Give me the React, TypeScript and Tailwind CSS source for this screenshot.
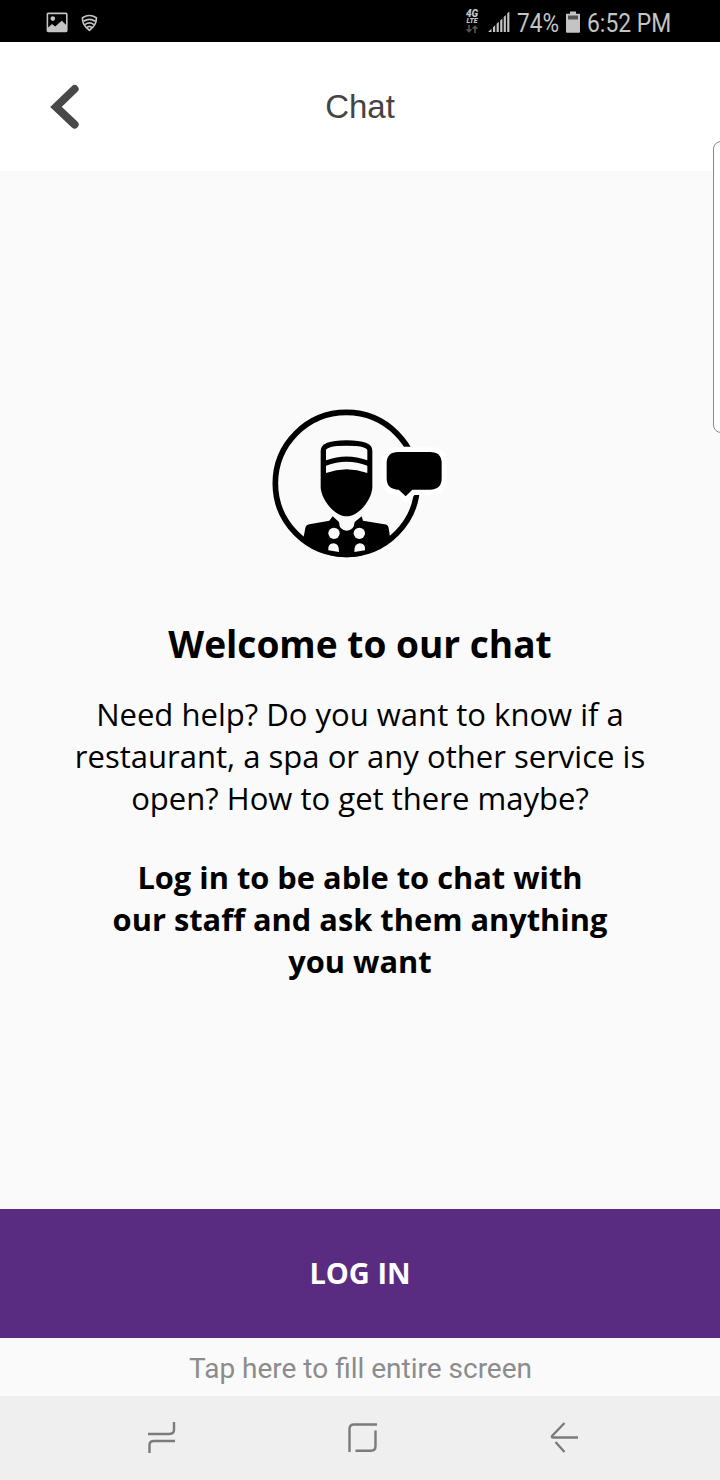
const StatusBar = () => {
  return (
    <div className="flex h-[42px] items-center bg-black font-['Roboto',sans-serif] text-[#c4c4c4]">
      <svg className="mt-[2px] ml-[46px] h-[21px] w-[22px]" viewBox="0 0 22 21" fill="#c4c4c4">
        <path
          fillRule="evenodd"
          d="M2.200.5h17.800q1.600 0 1.600 1.600v16.500q0 1.600-1.600 1.600H2.200Q.6 20.200.6 18.600V2.100Q.6.5 2.200.5ZM2.200 2.200V15.500l3.800-3.500 3.200 2.500 6.500-5.700 4.300 4V2.200Z"
        />
        <circle cx="6.800" cy="6.600" r="2.300" />
      </svg>
      <svg
        className="mt-[3px] ml-[13px] h-[18px] w-[17px]"
        viewBox="0 0 17 18"
        fill="none"
        stroke="#c4c4c4"
        strokeWidth="1.700"
      >
        <path d="M1.500 3.800Q8.400-.8 15.300 3.800 15.800 11 8.400 16.200 1 11 1.500 3.800Z" />
        <path d="M2.600 7.300Q8.400 3.600 14.200 7.300M4 10.600Q8.400 7.300 12.800 10.600M5.800 13.700Q8.400 11 11 13.700" />
      </svg>
      <div className="ml-auto flex w-[14px] flex-col items-center text-[10px] leading-[8px] font-black italic">
        <span>4G</span>
        <span className="text-[7px] leading-[7px]">LTE</span>
        <svg className="h-[8px] w-[12px]" viewBox="0 0 12 8" fill="none" stroke="#555" strokeWidth="1.600">
          <path d="M3 0V6.500M.6 4.200 3 6.600 5.400 4.200M9 8V1.500M6.600 3.800 9 1.400 11.400 3.800" />
        </svg>
      </div>
      <svg className="mt-[2px] ml-[9px] h-[22px] w-[22px]" viewBox="0 0 22 22" fill="#c4c4c4">
        <path d="M0 21 3.500 17.700V21ZM5 16.200 7.200 14.200V21H5ZM8.600 12.800 10.800 10.800V21H8.600ZM12.200 9.400 14.400 7.400V21H12.200ZM15.700 6 17.900 4V21H15.700ZM19.200 2.500 21.400.5V21H19.200Z" />
      </svg>
      <div className="mt-[4px] ml-[7px] w-[43px] text-[26px] leading-none">
        <span className="inline-block origin-left scale-x-[0.870]">74%</span>
      </div>
      <svg className="mt-[2px] ml-[5px] h-[23px] w-[16px]" viewBox="0 0 16 23">
        <path d="M5 .5h6v2.300h3.500q.5 0 .5.500v17.500q0 1-1 1H2q-1 0-1-1V3.300q0-.5.500-.5H5Z" fill="#c4c4c4" />
        <path d="M3 4.500h10v4H3Z" fill="#555" />
      </svg>
      <div className="mt-[4px] mr-[49px] ml-[6px] w-[84px] text-[26px] leading-none whitespace-nowrap">
        <span className="inline-block origin-left scale-x-[0.880]">6:52 PM</span>
      </div>
    </div>
  );
};

const Header = () => {
  return (
    <div className="grid h-[129px] grid-cols-[120px_1fr_120px] items-center bg-white">
      <svg
        className="ml-[50px] h-[46px] w-[30px]"
        viewBox="0 0 30 46"
        fill="none"
        stroke="#484848"
        strokeWidth="8"
        strokeLinecap="round"
      >
        <path d="M24.600 5 6 23 24.600 40.500" />
      </svg>
      <h1 className="text-center font-['Liberation_Sans',sans-serif] text-[33px] leading-none text-[#444]">Chat</h1>
    </div>
  );
};

const ConciergeIcon = () => {
  return (
    <svg className="h-[170px] w-[200px]" viewBox="0 0 600 510">
      <circle cx="259" cy="250" r="213" fill="none" stroke="#000" strokeWidth="17" />
      {/* jacket */}
      <path
        d="M131 410 136 384Q138 375 148 373L208 362 218 349 237 366Q238 392 260 392 282 392 284 366L305 349 309 362 373 373Q384 374 386 384L390 410Q335 472 260 472 184 472 131 410Z"
        fill="#000"
      />
      <g fill="#fafafa">
        <circle cx="222" cy="400" r="17" />
        <circle cx="298" cy="400" r="17" />
        <path d="M205 451Q202 431 221 430 238 431 237 456ZM283 456Q282 431 299 430 318 431 315 451Z" />
      </g>
      {/* hat and face */}
      <path
        d="M182 152Q182 121 260 121 337 121 337 152V260C337 295 299 349 260 349S182 295 182 260Z"
        fill="#000"
      />
      <path
        d="M198 150Q203 137 260 137 317 137 322 150V181Q260 158 198 181ZM198 197Q260 174 322 197V219Q260 197 198 219Z"
        fill="#fafafa"
      />
      {/* speech bubble */}
      <path
        d="M415 156H510Q545 156 545 190V235Q545 269 510 269H457L437 289 416 269Q380 269 380 235V190Q380 156 415 156Z"
        fill="#000"
        stroke="#fff"
        strokeWidth="32"
        strokeLinejoin="round"
        paintOrder="stroke"
      />
    </svg>
  );
};

const NavBar = () => {
  return (
    <div className="flex h-[84px] bg-[#efefef]">
      <svg className="mt-[25px] ml-[147px] h-[34px] w-[30px]" viewBox="0 0 30 34" fill="none" stroke="#7b7b7b" strokeWidth="2.400">
        <path d="M1 13H22Q27 13 27 9V1M28 20H7Q2.500 20 2.500 24V32" />
      </svg>
      <svg className="mt-[25px] ml-[170px] h-[34px] w-[32px]" viewBox="0 0 32 34" fill="none" stroke="#7b7b7b" strokeWidth="2.400">
        <path d="M2.500 31V8Q2.500 3.500 7 3.500H30M28.500 9.500V25Q28.500 29.700 24 29.700H8.500" />
      </svg>
      <svg className="mt-[25px] ml-[168px] h-[34px] w-[32px]" viewBox="0 0 32 34" fill="none" stroke="#7b7b7b" strokeWidth="2.400">
        <path d="M17.500 2 5.500 14.500Q4 16.500 6 16.500H31M8.500 21 17.500 31" />
      </svg>
    </div>
  );
};

const App = () => {
  return (
    <div className="relative flex h-[1480px] w-[720px] flex-col overflow-hidden bg-[#fafafa]">
      <StatusBar />
      <Header />
      <main className="flex flex-1 flex-col items-center pt-[229px] text-center font-['Open_Sans',sans-serif] text-black">
        <ConciergeIcon />
        <h2 className="mt-[48px] text-[37.100px] leading-[52px] font-bold">Welcome to our chat</h2>
        <p className="mt-[23px] text-[31.050px] leading-[42px]">
          Need help? Do you want to know if a
          <br />
          restaurant, a spa or any other service is
          <br />
          open? How to get there maybe?
        </p>
        <p className="mt-[37px] text-[30.800px] leading-[42px] font-bold">
          Log in to be able to chat with
          <br />
          our staff and ask them anything
          <br />
          you want
        </p>
      </main>
      <button className="h-[129px] bg-[#592c82] pb-[2px] font-['Open_Sans',sans-serif] text-[29px] font-bold text-white">
        LOG IN
      </button>
      <div className="flex h-[58px] items-center justify-center pt-[4px] pl-px font-['Roboto',sans-serif] text-[28px] text-[#8c8c8c]">
        Tap here to fill entire screen
      </div>
      <NavBar />
      {/* edge panel handle */}
      <div className="absolute top-[141px] -right-[9px] h-[292px] w-[16px] rounded-[9px] border border-[#888] bg-white" />
    </div>
  );
};

export default App;
